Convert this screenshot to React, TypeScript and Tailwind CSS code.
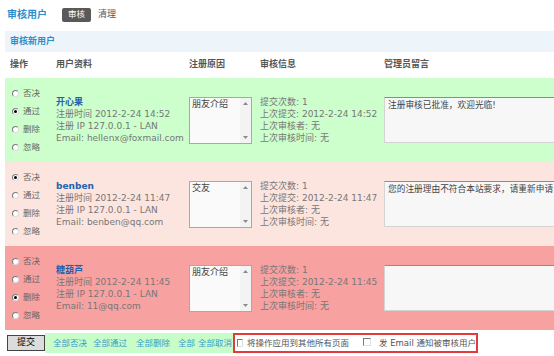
import React from "react";

type U = {
  bg: string;
  name: string;
  time: string;
  email: string;
  reason: string;
  checked: number;
  msg: string;
};

const users: U[] = [
  {
    bg: "bg-[#ccffcc]",
    name: "开心果",
    time: "2012-2-24 14:52",
    email: "hellenx@foxmail.com",
    reason: "朋友介绍",
    checked: 1,
    msg: "注册审核已批准，欢迎光临!",
  },
  {
    bg: "bg-[#fde5df]",
    name: "benben",
    time: "2012-2-24 11:47",
    email: "benben@qq.com",
    reason: "交友",
    checked: 0,
    msg: "您的注册理由不符合本站要求，请重新申请",
  },
  {
    bg: "bg-[#f8a1a1]",
    name: "糖葫芦",
    time: "2012-2-24 11:45",
    email: "11@qq.com",
    reason: "朋友介绍",
    checked: 2,
    msg: "",
  },
];

const opts = ["否决", "通过", "删除", "忽略"];

function Radio({ on }: { on: boolean }) {
  return (
    <span className="flex items-center justify-center w-[7px] h-[7px] rounded-full bg-white border border-[#7a7a7a] border-r-[#dcdcdc] border-b-[#dcdcdc]">
      {on && <span className="w-[3px] h-[3px] rounded-full bg-black" />}
    </span>
  );
}

function Check() {
  return (
    <span className="inline-block w-[8px] h-[8px] bg-white border border-[#7a7a7a] border-r-[#e0e0e0] border-b-[#e0e0e0]" />
  );
}

function Row({ u }: { u: U }) {
  return (
    <div
      className={`grid grid-cols-[51px_133px_71px_124px_200px] h-[84px] items-center ${u.bg}`}
    >
      <div className="flex flex-col pl-[7px]">
        {opts.map((o, i) => (
          <div key={o} className="flex items-center h-[18px] gap-[4px] text-[8.5px] text-[#666]">
            <Radio on={i === u.checked} />
            <span>{o}</span>
          </div>
        ))}
      </div>
      <div className="flex flex-col text-[9px] leading-[12px] text-[#777]">
        <span className="font-bold text-[#2462ad]">{u.name}</span>
        <span>注册时间 {u.time}</span>
        <span>注册 IP 127.0.0.1 - LAN</span>
        <span>Email: {u.email}</span>
      </div>
      <div className="flex w-[63px] h-[47px] border border-[#a8a8a8] bg-[#fafafa]">
        <div className="flex-1 px-[2px] pt-[1px] text-[9px] leading-[11px] text-[#444]">
          {u.reason}
        </div>
        <div className="flex flex-col justify-between items-center w-[11px] py-[4px] bg-[#f3f3f3]">
          <svg width="5" height="3" viewBox="0 0 5 3">
            <path d="M0 3 L2.5 0 L5 3 Z" fill="#8a8a8a" />
          </svg>
          <svg width="5" height="3" viewBox="0 0 5 3">
            <path d="M0 0 L2.5 3 L5 0 Z" fill="#8a8a8a" />
          </svg>
        </div>
      </div>
      <div className="flex flex-col text-[9px] leading-[12px] text-[#777]">
        <span>提交次数: 1</span>
        <span>上次提交: {u.time}</span>
        <span>上次审核者: 无</span>
        <span>上次审核时间: 无</span>
      </div>
      <div className="w-[200px] h-[46px] bg-[#f7f7f7] border border-[#d4d4d4] border-t-[#8c8c8c] px-[3px] pt-[2px] text-[8.7px] leading-[11px] text-[#444] whitespace-nowrap overflow-hidden">
        {u.msg}
      </div>
    </div>
  );
}

export default function App() {
  return (
    <div className="w-[554px] h-[356px] overflow-hidden bg-white font-['DejaVu_Sans','Noto_Sans_CJK_SC',sans-serif]">
      <div className="flex items-center h-[29px] pl-[7px]">
        <span className="text-[10px] font-bold text-[#2b8fcf] tracking-[0px]">审核用户</span>
        <span className="ml-[15px] flex items-center justify-center w-[29px] h-[14px] rounded-[2px] bg-[#595959] text-white text-[8.5px]">
          审核
        </span>
        <span className="ml-[7px] text-[9px] text-[#555]">清理</span>
      </div>
      <div className="pl-[5px] w-[620px] mt-[2px]">
        <div className="flex items-center h-[21px] bg-[#eef5fa] pl-[5px] text-[9px] font-bold text-[#2b8fcf]">
          审核新用户
        </div>
        <div className="grid grid-cols-[51px_133px_71px_124px_200px] h-[26px] items-center text-[9px] font-bold text-[#555]">
          <span className="pl-[5px]">操作</span>
          <span>用户资料</span>
          <span>注册原因</span>
          <span>审核信息</span>
          <span>管理员留言</span>
        </div>
        {users.map((u) => (
          <Row key={u.name} u={u} />
        ))}
        <div className="flex items-center h-[20px] mt-[3px]">
          <span className="ml-[2px] flex items-center justify-center w-[38px] h-[16px] border border-[#444] bg-[#dcdcdc] text-[9px] text-black">
            提交
          </span>
          <div className="flex items-center h-full w-[188px] bg-[#c8fcc8] pl-[8px] text-[8.5px] text-[#3a9ccc] whitespace-nowrap overflow-hidden">
            <span>全部否决</span>
            <span className="ml-[6px]">全部通过</span>
            <span className="ml-[9px]">全部删除</span>
            <span className="ml-[8px]">全部</span>
            <span className="ml-[3px]">全部取消</span>
          </div>
          <div className="flex items-center h-full w-[245px] border-2 border-[#e23b3b] pl-[2px] text-[8.5px] text-[#555] whitespace-nowrap">
            <Check />
            <span className="ml-[4px]">将操作应用到其他所有页面</span>
            <span className="ml-[14px]">
              <Check />
            </span>
            <span className="ml-[8px]">发 Email 通知被审核用户</span>
          </div>
        </div>
      </div>
    </div>
  );
}
